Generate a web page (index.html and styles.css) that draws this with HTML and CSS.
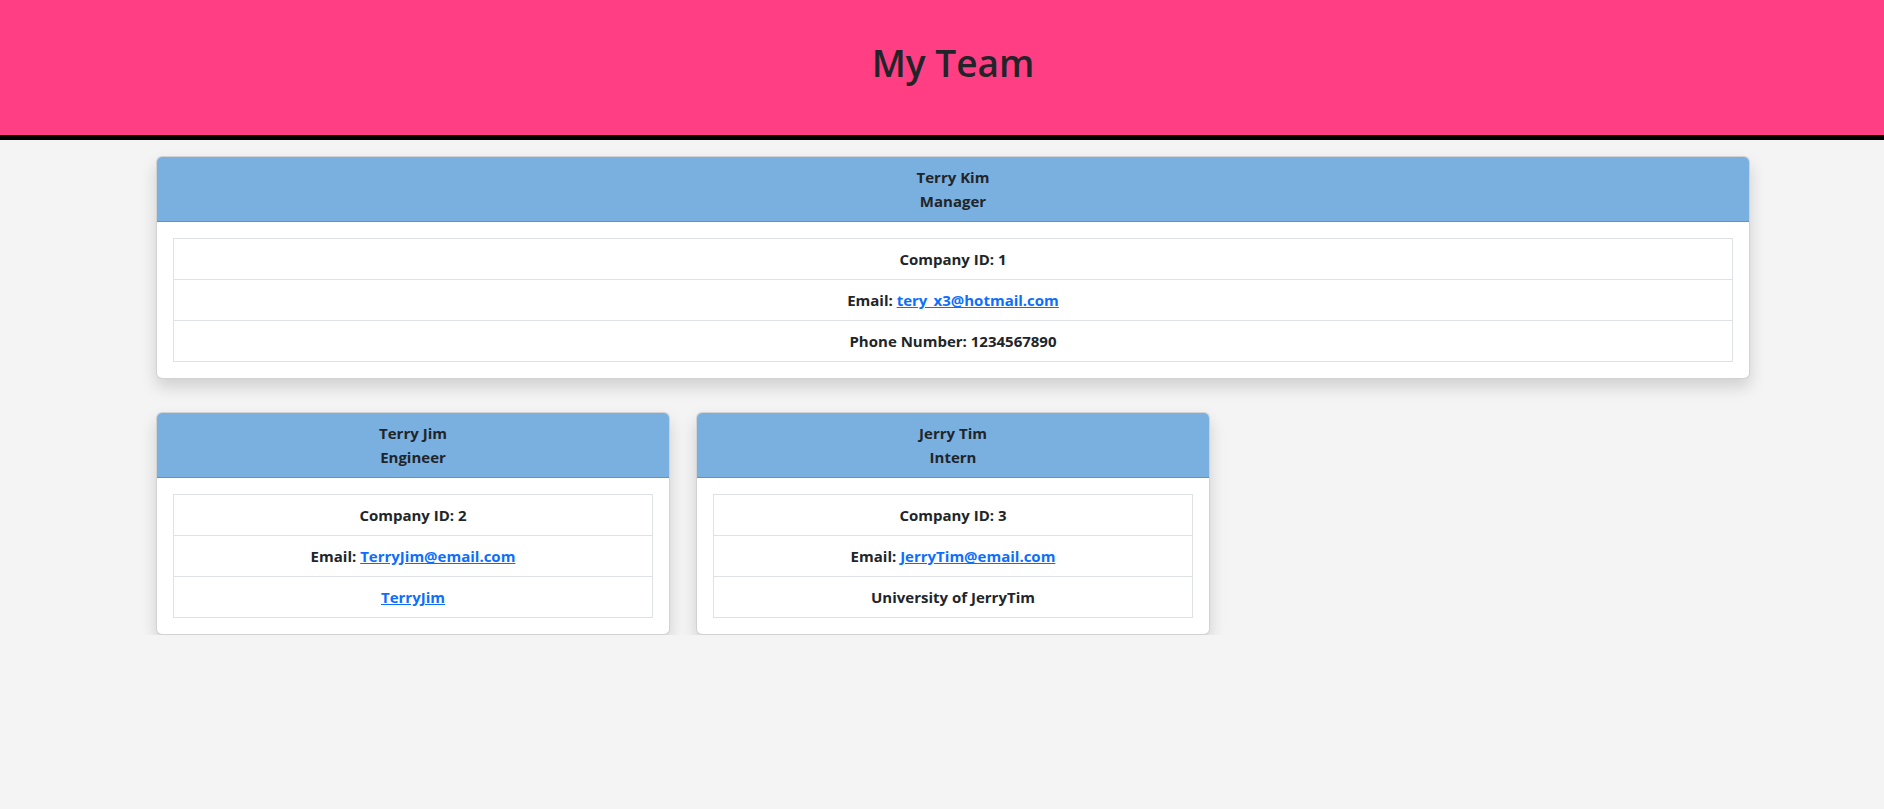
FILE: index.html
```html
<!DOCTYPE html>
<html lang="en">
<head>
<meta charset="utf-8">
<title>My Team</title>
<link rel="stylesheet" href="styles.css">
</head>
<body>
<header class="topbar">
  <h1 class="title">My Team</h1>
</header>
<main class="team">
  <section class="card card-wide">
    <div class="card-header">Terry Kim<br>Manager</div>
    <div class="card-body">
      <table class="info">
        <tr><td>Company ID: 1</td></tr>
        <tr><td>Email: <a href="#">tery_x3@hotmail.com</a></td></tr>
        <tr><td>Phone Number: 1234567890</td></tr>
      </table>
    </div>
  </section>
  <section class="card">
    <div class="card-header">Terry Jim<br>Engineer</div>
    <div class="card-body">
      <table class="info">
        <tr><td>Company ID: 2</td></tr>
        <tr><td>Email: <a href="#">TerryJim@email.com</a></td></tr>
        <tr><td><a href="#">TerryJim</a></td></tr>
      </table>
    </div>
  </section>
  <section class="card">
    <div class="card-header">Jerry Tim<br>Intern</div>
    <div class="card-body">
      <table class="info">
        <tr><td>Company ID: 3</td></tr>
        <tr><td>Email: <a href="#">JerryTim@email.com</a></td></tr>
        <tr><td>University of JerryTim</td></tr>
      </table>
    </div>
  </section>
</main>
</body>
</html>
```
FILE: styles.css
```css
* { box-sizing: border-box; }
html, body { margin: 0; padding: 0; }
body {
  background: #f4f4f4;
  font-family: "Open Sans", "Noto Sans", sans-serif;
  color: #212529;
}
.topbar {
  background: #ff3e84;
  height: 140px;
  border-bottom: 5px solid #000;
  display: flex;
  align-items: center;
  justify-content: center;
  padding-left: 22px;
}
.title {
  margin: 0 0 8px 0;
  font-size: 37px;
  font-weight: 600;
  line-height: 1.2;
  color: #212529;
}
.team {
  padding: 16px 134px 0 156px;
  display: grid;
  grid-template-columns: repeat(3, 1fr);
  column-gap: 26px;
  row-gap: 33px;
  align-items: start;
}
.card-wide { grid-column: 1 / -1; }
.card {
  background: #fff;
  border: 1px solid rgba(0,0,0,0.175);
  border-radius: 6px;
  box-shadow: 0 8px 16px rgba(0,0,0,0.15);
  overflow: hidden;
}
.card-header {
  background: #7ab0e0;
  text-align: center;
  font-weight: 700;
  font-size: 15px;
  line-height: 24px;
  padding: 8px 16px;
  border-bottom: 1px solid rgba(0,0,0,0.175);
  color: #212529;
}
.card-body {
  padding: 16px;
}
.info {
  width: 100%;
  border-collapse: collapse;
}
.info td {
  border: 1px solid #dee2e6;
  padding: 8px;
  text-align: center;
  font-weight: 700;
  font-size: 15px;
  line-height: 24px;
  color: #212529;
}
.info a { color: #0d6efd; text-decoration: underline; }
```
